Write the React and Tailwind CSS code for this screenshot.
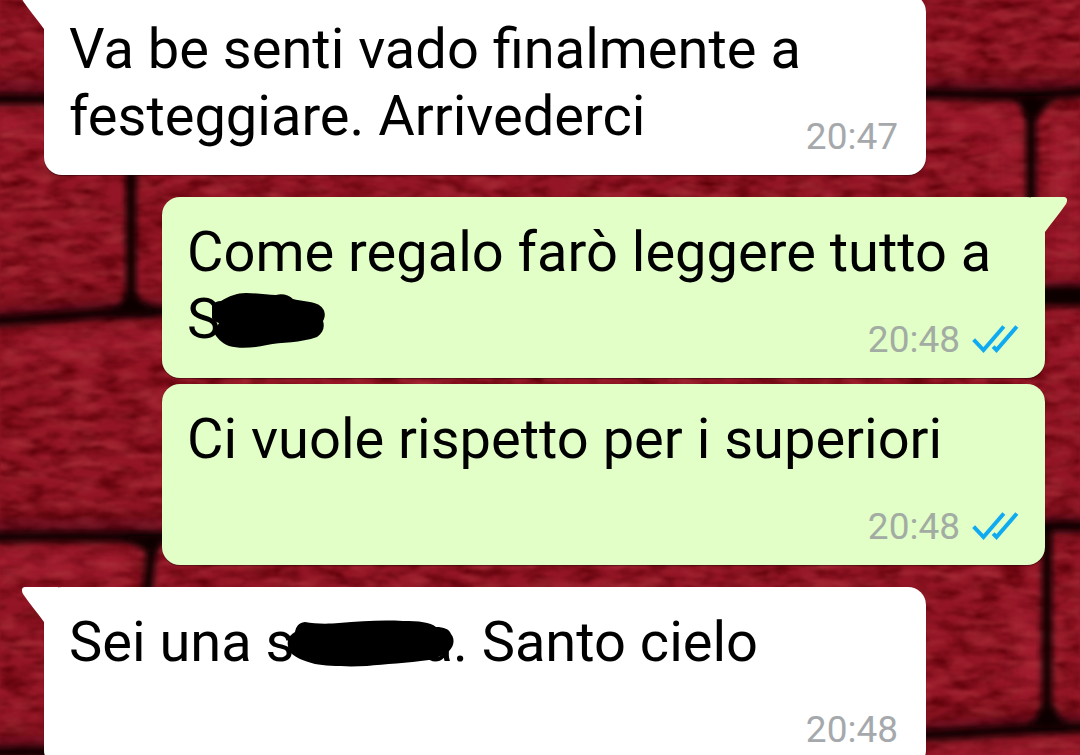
import React from 'react';

const messages = [
  { id: 1, side: 'in', time: '20:47', tail: true, text: 'Va be senti vado finalmente a festeggiare. Arrivederci' },
  {
    id: 2,
    side: 'out',
    time: '20:48',
    tail: true,
    text: (
      <>
        Come regalo farò leggere tutto a{' '}
        <span className="whitespace-nowrap">
          S<ShortScribble />
        </span>
      </>
    ),
  },
  { id: 3, side: 'out', time: '20:48', tail: false, text: 'Ci vuole rispetto per i superiori' },
  {
    id: 4,
    side: 'in',
    time: '20:48',
    tail: true,
    text: (
      <>
        Sei una s<LongScribble />a. Santo cielo
      </>
    ),
  },
];

// Marker strokes over a hidden name
function ShortScribble() {
  return (
    <span className="relative inline-block h-px w-24">
      <svg className="absolute -left-2 -top-13 h-16 w-32" viewBox="1 1 128 64" fill="#000" aria-hidden="true">
        <path d="M-1 25C0 20 5 17 10 17C18 12 26 9 35 9C46 9 56 11 65 11C71 9 78 11 82 15C90 17 99 17 106 20C113 23 116 30 112 37C114 43 112 49 106 53C90 59 70 58 56 61C43 64 28 65 18 62C10 59 5 53 3 48L8 39C1 37 -2 31 -1 25Z" />
      </svg>
    </span>
  );
}

function LongScribble() {
  return (
    <span className="relative inline-block h-px w-32">
      <svg className="absolute -left-2 -top-13 z-10 h-16 w-44" viewBox="0 1 176 64" fill="#000" aria-hidden="true">
        <path d="M1 33C2 29 5 27 8 25C9 20 11 16 18 15C28 17 42 17 52 16C75 14 95 13 116 14C132 14 143 15 149 20C157 20 162 22 164 27C169 33 166 41 161 45C156 49 148 51 142 53C120 56 98 57 80 59C60 60 40 59 28 57C16 54 8 50 4 46C1 42 0 37 1 33Z" />
      </svg>
    </span>
  );
}

function ReadTicks() {
  return (
    <svg
      className="h-8 w-12"
      viewBox="1 1 48 32"
      fill="none"
      stroke="#10aaf0"
      strokeWidth="4"
      strokeLinecap="square"
      aria-label="Letto"
    >
      <path d="M4 18L12.500 27L31.500 5M23.500 25L25.500 27L44.500 5" />
    </svg>
  );
}

function Tail({ side }) {
  return (
    <svg
      className={side === 'out' ? 'absolute -right-[22px] top-0 h-10 w-9 -scale-x-100' : 'absolute -left-[22px] top-0 h-10 w-9'}
      viewBox="0 0 36 40"
      fill={side === 'out' ? '#e1ffc7' : '#ffffff'}
      aria-hidden="true"
    >
      <path d="M36 0H3C0 0 -1 3 1 7C7 16 15 25 22 35L36 40Z" />
    </svg>
  );
}

function Bubble({ side, time, tail, text }) {
  const out = side === 'out';

  return (
    <div className={out ? 'pl-[162px] pr-[35px]' : 'pl-11 pr-[154px]'}>
      <div
        className={`relative rounded-[18px] px-[25px] pb-[25px] pt-[22px] shadow-[0_1px_1px_rgba(0,0,0,0.4)] ${
          out ? 'bg-[#e1ffc7]' : 'bg-white'
        }`}
      >
        {tail && <Tail side={side} />}
        <p className="relative text-[56px] leading-[67px] text-black">
          {text}
          {/* keeps the last line clear of the time */}
          <span className="inline-block h-px w-40" aria-hidden="true" />
        </p>
        <div
          className={`absolute bottom-[15px] flex items-center gap-3 text-[37px] leading-[46px] ${
            out ? 'right-[25px] text-[#a3aca3]' : 'right-7 text-[#a5a9ac]'
          }`}
        >
          <time>{time}</time>
          {out && <ReadTicks />}
        </div>
      </div>
    </div>
  );
}

function BrickWall() {
  return (
    <svg
      className="absolute inset-0 h-full w-full"
      viewBox="0 0 1080 755"
      preserveAspectRatio="xMidYMid slice"
      aria-hidden="true"
    >
      <defs>
        <filter id="grain" x="0" y="0" width="100%" height="100%" colorInterpolationFilters="sRGB">
          <feTurbulence type="fractalNoise" baseFrequency="0.04 0.09" numOctaves="4" seed="8" />
          <feColorMatrix values="0 0 0 0 0.36  0 0 0 0 0  0 0 0 0 0.03  1.900 0 0 0 -0.700" />
          <feGaussianBlur stdDeviation="0.8" />
        </filter>
        <filter id="glint" x="0" y="0" width="100%" height="100%" colorInterpolationFilters="sRGB">
          <feTurbulence type="fractalNoise" baseFrequency="0.03 0.1" numOctaves="4" seed="21" />
          <feColorMatrix values="0 0 0 0 0.68  0 0 0 0 0.2  0 0 0 0 0.24  0 1.700 0 0 -0.780" />
          <feGaussianBlur stdDeviation="0.8" />
        </filter>
        <filter id="soft" x="0" y="0" width="1080" height="755" filterUnits="userSpaceOnUse">
          <feGaussianBlur stdDeviation="3" />
        </filter>
        <filter id="wide" x="0" y="0" width="1080" height="755" filterUnits="userSpaceOnUse">
          <feGaussianBlur stdDeviation="10" />
        </filter>
      </defs>
      <rect width="1080" height="755" fill="#941626" />
      <rect width="1080" height="755" filter="url(#grain)" />
      <g fill="none" stroke="#b8263c" strokeWidth="18" opacity="0.6" filter="url(#wide)">
        <path d="M-10 124H120M20 347L170 337M-10 562L130 564M930 118H1010V195M1064 120V280M1028 600V700M935 752H1080M1060 350H1090" />
      </g>
      <rect width="1080" height="755" filter="url(#glint)" />
      <g fill="none" stroke="#3b0008" strokeWidth="20" opacity="0.6" filter="url(#wide)">
        <path d="M-10 90H60M-10 316L90 310L170 306M-10 528H170M920 88H1090M1040 290H1090M1040 524H1090M-10 746H60M920 730L1090 720" />
      </g>
      <g fill="none" stroke="#0b0003" strokeWidth="10" filter="url(#soft)">
        <path d="M-10 99H60M-10 321C40 320 80 311 170 311M131 100V306M-10 537C30 536 90 536 170 537M153 540L147 592M-10 752H60" />
        <path d="M920 93C970 94 1020 98 1090 91M1031 98V210M1030 526H1090M1047 526V722M920 735C970 734 1030 727 1090 727" />
      </g>
      <path d="M1030 296H1090" stroke="#0b0003" strokeWidth="20" fill="none" filter="url(#soft)" />
      <g fill="#0b0003" filter="url(#soft)">
        <path d="M1014 96H1056L1036 118H1028ZM130 292L112 314H158ZM1044 706L1028 728H1068L1052 706ZM120 536H166L152 554Z" />
      </g>
    </svg>
  );
}

export default function App() {
  return (
    <main className="relative h-screen overflow-hidden bg-[#941626] font-[Roboto,sans-serif]">
      <BrickWall />
      <div className="relative -mt-1.5 flex flex-col">
        {messages.map((message, i) => (
          <div key={message.id} className={i === 0 ? '' : message.tail ? 'mt-[22px]' : 'mt-1.5'}>
            <Bubble {...message} />
          </div>
        ))}
      </div>
    </main>
  );
}
